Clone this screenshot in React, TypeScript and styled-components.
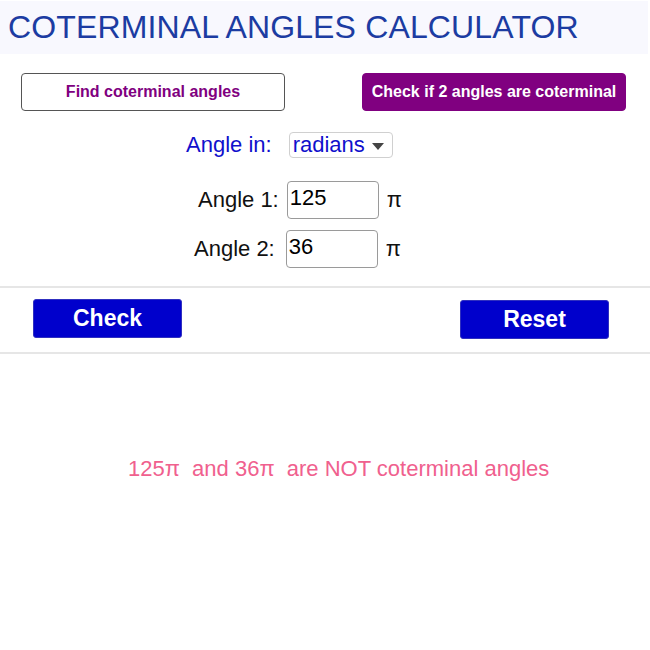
import React from 'react';
import styled, { createGlobalStyle } from 'styled-components';

const Global = createGlobalStyle`
  body { margin: 0; background: #fff; font-family: "Liberation Sans", Arial, sans-serif; }
`;

const Page = styled.div`
  width: 650px; height: 650px; display: flex; flex-direction: column; overflow: hidden;
`;

const Header = styled.div`
  height: 53px; margin: 1px 2px 0 0; background: #f8f8fe; padding-left: 8px;
  display: flex; align-items: center;
`;

const Title = styled.h1`
  margin: 0; font-size: 32px; font-weight: 400; color: #1c3ca2; letter-spacing: 0.15px;
`;

const ModeRow = styled.div`
  display: flex; margin-top: 19px; padding-left: 21px; gap: 77px;
`;

const ModeButton = styled.button<{ $active?: boolean }>`
  width: 264px; height: 38px; border-radius: 4px; font-family: inherit;
  font-size: 16px; font-weight: 700; cursor: pointer; padding: 0;
  border: 1px solid ${(p) => (p.$active ? '#800080' : '#555')};
  background: ${(p) => (p.$active ? '#800080' : '#fff')};
  color: ${(p) => (p.$active ? '#fff' : '#800080')};
`;

const Row = styled.div<{ $indent: number; $top: number }>`
  display: flex; align-items: center; margin-top: ${(p) => p.$top}px;
  padding-left: ${(p) => p.$indent}px;
`;

const Label = styled.span<{ $blue?: boolean; $gap: number }>`
  font-size: 22px; color: ${(p) => (p.$blue ? '#1010cc' : '#111')};
  margin-right: ${(p) => p.$gap}px;
`;

const Select = styled.div`
  width: 104px; height: 26px; box-sizing: border-box; border: 1px solid #d0d0d0; border-radius: 4px;
  display: flex; align-items: center; padding-left: 3px; gap: 7px;
  font-size: 22px; color: #1010cc;
`;

const Caret = styled.span`
  width: 0; height: 0; border-left: 6px solid transparent; border-right: 6px solid transparent;
  border-top: 7px solid #444; margin-top: 2px;
`;

const Input = styled.input`
  width: 92px; height: 38px; box-sizing: border-box; border: 1px solid #9a9a9a; border-radius: 4px;
  font-family: inherit; font-size: 22px; color: #000; padding: 0 0 4px 2px; outline: none;
`;

const Pi = styled.span`
  font-size: 22px; color: #111; margin-left: 8px;
`;

const Divider = styled.div<{ $top: number }>`
  height: 2px; background: #e6e6e6; margin-top: ${(p) => p.$top}px;
`;

const ActionRow = styled.div`
  display: flex; margin-top: 11px; padding-left: 33px; gap: 278px; align-items: flex-start;
`;

const ActionButton = styled.button<{ $shift?: number }>`
  width: 149px; height: 39px; border: 1px solid #3030c0; border-radius: 3px; background: #0000cc;
  color: #fff; font-family: inherit; font-size: 23px; font-weight: 700; padding: 0;
  margin-top: ${(p) => p.$shift ?? 0}px; cursor: pointer;
`;

const Result = styled.div`
  margin-top: 102px; padding-left: 128px; font-size: 22px; line-height: 26px; color: #f0608e;
  white-space: pre;
`;

export default function App() {
  return (
    <Page>
      <Global />
      <Header>
        <Title>COTERMINAL ANGLES CALCULATOR</Title>
      </Header>
      <ModeRow>
        <ModeButton>Find coterminal angles</ModeButton>
        <ModeButton $active>Check if 2 angles are coterminal</ModeButton>
      </ModeRow>
      <Row $indent={186} $top={21}>
        <Label $blue $gap={17}>Angle in:</Label>
        <Select>
          radians
          <Caret />
        </Select>
      </Row>
      <Row $indent={198} $top={23}>
        <Label $gap={8}>Angle 1:</Label>
        <Input readOnly value="125" />
        <Pi>π</Pi>
      </Row>
      <Row $indent={194} $top={11}>
        <Label $gap={11}>Angle 2:</Label>
        <Input readOnly value="36" />
        <Pi>π</Pi>
      </Row>
      <Divider $top={18} />
      <ActionRow>
        <ActionButton>Check</ActionButton>
        <ActionButton $shift={1}>Reset</ActionButton>
      </ActionRow>
      <Divider $top={13} />
      <Result>{'125π  and 36π  are NOT coterminal angles'}</Result>
    </Page>
  );
}
